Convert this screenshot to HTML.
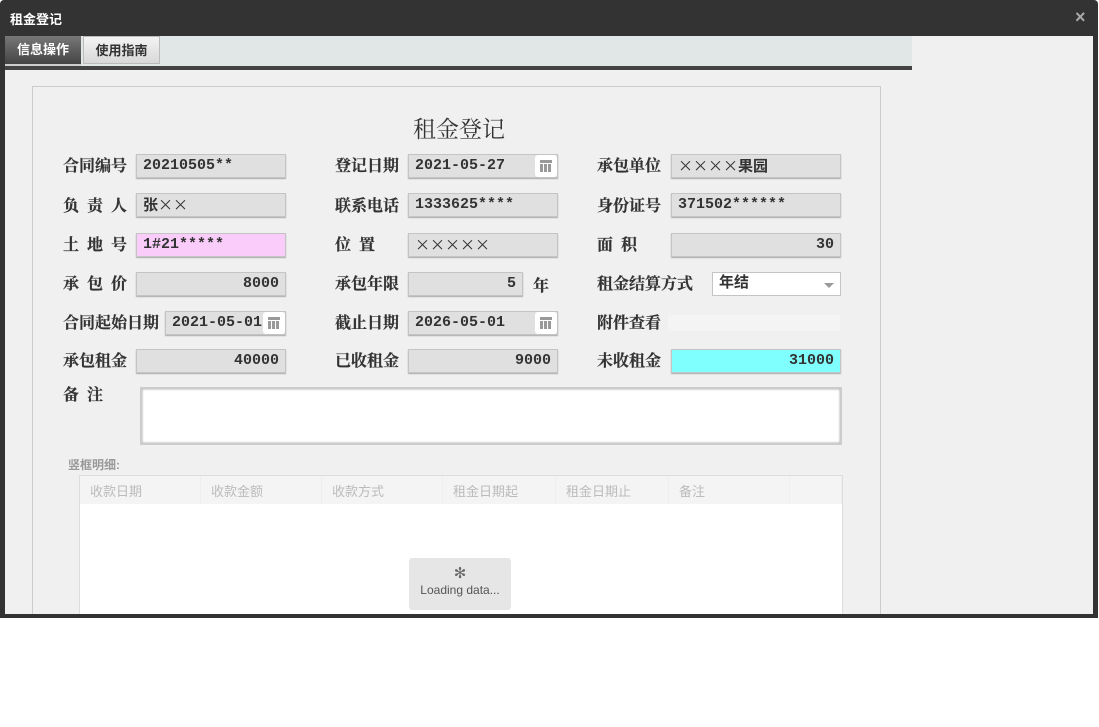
<!DOCTYPE html><html><head><meta charset="utf-8"><style>
body{margin:0;width:1099px;height:727px;background:#fff;position:relative;overflow:hidden;font-family:"Liberation Serif","Noto Serif CJK SC",serif;}
.a{position:absolute}
.lb{position:absolute;font-size:16px;color:#333;line-height:20px;font-weight:bold;-webkit-text-stroke:0.2px #333}
.f{position:absolute;background:#e0e0e0;border:1px solid #c4c4c4;box-shadow:0 1px 1px #aaa;font-size:15px;line-height:22px;color:#333;padding:0 6px;box-sizing:border-box;height:24px;font-family:"Liberation Mono","Noto Sans CJK SC",monospace;font-weight:bold}
.r{text-align:right}
.x{font-family:"Noto Sans CJK SC",sans-serif;font-weight:normal}
.cal{position:absolute;width:22px;height:22px;background:#fff;border-radius:3px}
.cal:before{content:"";position:absolute;left:5px;top:5px;width:12px;height:3px;background:#999}
.cal:after{content:"";position:absolute;left:5px;top:9px;width:12px;height:8px;background:repeating-linear-gradient(90deg,#999 0 3px,#fff 3px 4px)}
th{font-weight:normal;text-align:left;color:#bbb;font-size:13px;padding-left:10px;border-right:1px solid #eee;font-family:"Liberation Sans","Noto Sans CJK SC",sans-serif}
</style></head><body>
<div class="a" style="left:0;top:0;width:1098px;height:618px;background:#333;border-radius:4px"></div>
<div class="a" style="left:10px;top:9px;color:#fff;font-size:13px;font-weight:bold;font-family:'Liberation Sans','Noto Sans CJK SC',sans-serif">租金登记</div>
<div class="a" style="left:1075px;top:7px;color:#aaa;font-size:18px;font-weight:bold;font-family:'Liberation Sans',sans-serif">×</div>
<div class="a" style="left:5px;top:36px;width:1088px;height:578px;background:#f0f0f0"></div>
<div class="a" style="left:5px;top:36px;width:907px;height:30px;background:#e1e6e6"></div>
<div class="a" style="left:5px;top:66px;width:907px;height:4px;background:#444"></div>
<div class="a" style="left:5px;top:36px;width:76px;height:28px;background:linear-gradient(#777,#444);color:#fff;font-size:13px;font-weight:bold;line-height:28px;text-align:center;font-family:'Liberation Sans','Noto Sans CJK SC',sans-serif;border-bottom:2px solid #ccc">信息操作</div>
<div class="a" style="left:83px;top:36px;width:77px;height:28px;background:linear-gradient(#f4f4f4,#d8d8d8);color:#333;font-size:13px;font-weight:bold;line-height:28px;text-align:center;font-family:'Liberation Sans','Noto Sans CJK SC',sans-serif;border:1px solid #bbb;box-sizing:border-box">使用指南</div>
<div class="a" style="left:32px;top:86px;width:849px;height:530px;border:1px solid #ccc;box-sizing:border-box"></div>
<div class="a" style="left:413px;top:111px;font-size:23px;color:#333">租金登记</div>

<div class="lb" style="left:63px;top:157px">合同编号</div><div class="f" style="left:136px;top:154px;width:150px">20210505**</div>
<div class="lb" style="left:335px;top:157px">登记日期</div><div class="f" style="left:408px;top:154px;width:150px">2021-05-27</div><div class="cal" style="left:535px;top:155px"></div>
<div class="lb" style="left:597px;top:157px">承包单位</div><div class="f" style="left:671px;top:154px;width:170px"><span class="x">××××</span>果园</div>

<div class="lb" style="left:63px;top:197px;letter-spacing:8px">负责人</div><div class="f" style="left:136px;top:193px;width:150px">张<span class="x">××</span></div>
<div class="lb" style="left:335px;top:197px">联系电话</div><div class="f" style="left:408px;top:193px;width:150px">1333625****</div>
<div class="lb" style="left:597px;top:197px">身份证号</div><div class="f" style="left:671px;top:193px;width:170px">371502******</div>

<div class="lb" style="left:63px;top:236px;letter-spacing:8px">土地号</div><div class="f" style="left:136px;top:233px;width:150px;background:#f9ccf9">1#21*****</div>
<div class="lb" style="left:335px;top:236px;letter-spacing:8px">位置</div><div class="f" style="left:408px;top:233px;width:150px"><span class="x">×××××</span></div>
<div class="lb" style="left:597px;top:236px;letter-spacing:8px">面积</div><div class="f r" style="left:671px;top:233px;width:170px">30</div>

<div class="lb" style="left:63px;top:275px;letter-spacing:8px">承包价</div><div class="f r" style="left:136px;top:272px;width:150px">8000</div>
<div class="lb" style="left:335px;top:275px">承包年限</div><div class="f r" style="left:408px;top:272px;width:115px">5</div><div class="lb" style="left:533px;top:277px">年</div>
<div class="lb" style="left:597px;top:275px">租金结算方式</div><div class="f" style="left:712px;top:272px;width:129px;background:#fff;box-shadow:none">年结</div><div class="a" style="left:824px;top:283px;border:5px solid transparent;border-top:5px solid #999"></div>

<div class="lb" style="left:63px;top:314px">合同起始日期</div><div class="f" style="left:165px;top:311px;width:121px;overflow:hidden;white-space:nowrap">2021-05-01</div><div class="cal" style="left:263px;top:312px"></div>
<div class="lb" style="left:335px;top:314px">截止日期</div><div class="f" style="left:408px;top:311px;width:150px">2026-05-01</div><div class="cal" style="left:535px;top:312px"></div>
<div class="lb" style="left:597px;top:314px">附件查看</div><div class="a" style="left:668px;top:315px;width:172px;height:16px;background:#f4f4f4"></div>

<div class="lb" style="left:63px;top:352px">承包租金</div><div class="f r" style="left:136px;top:349px;width:150px">40000</div>
<div class="lb" style="left:335px;top:352px">已收租金</div><div class="f r" style="left:408px;top:349px;width:150px">9000</div>
<div class="lb" style="left:597px;top:352px">未收租金</div><div class="f r" style="left:671px;top:349px;width:170px;background:#80ffff">31000</div>

<div class="lb" style="left:63px;top:386px;letter-spacing:8px">备注</div>
<div class="a" style="left:140px;top:387px;width:702px;height:58px;background:#fff;border:2px solid #ccc;box-sizing:border-box;box-shadow:inset 0 0 2px #999"></div>
<div class="a" style="left:68px;top:456px;font-size:12px;font-weight:bold;color:#999;font-family:'Liberation Sans','Noto Sans CJK SC',sans-serif">竖框明细:</div>
<div class="a" style="left:79px;top:475px;width:764px;height:140px;background:#fff;border:1px solid #ddd;box-sizing:border-box">
<table style="border-collapse:collapse;width:762px;height:28px;background:#f4f4f4;table-layout:fixed"><tr>
<th style="width:109px">收款日期</th><th style="width:109px">收款金额</th><th style="width:109px">收款方式</th><th style="width:101px">租金日期起</th><th style="width:101px">租金日期止</th><th style="width:109px">备注</th><th></th></tr></table></div>
<div class="a" style="left:409px;top:558px;width:102px;height:52px;background:#e6e6e6;border-radius:3px;text-align:center;font-family:'Liberation Sans',sans-serif;font-size:12px;color:#555"><div style="margin-top:6px;font-size:15px;color:#666">✻</div><div style="margin-top:1px">Loading data...</div></div>
<div class="a" style="left:0;top:614px;width:1098px;height:4px;background:#333"></div>
</body></html>
